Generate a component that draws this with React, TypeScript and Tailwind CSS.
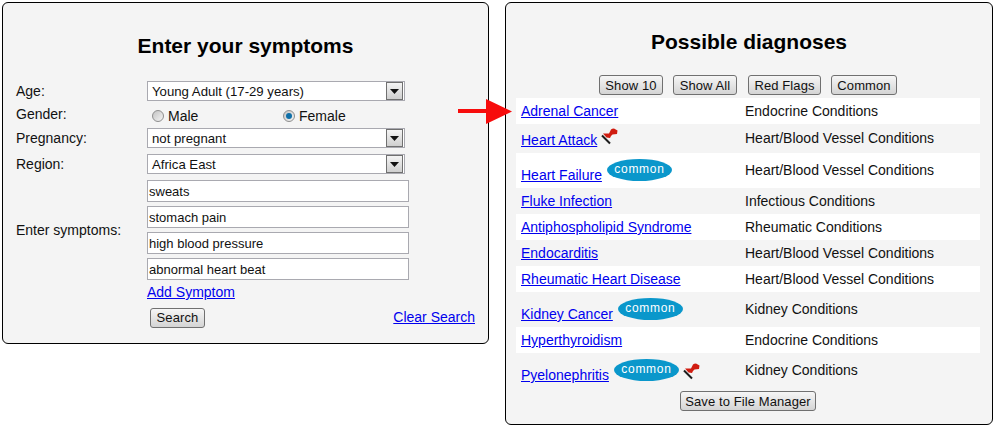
const font = { fontFamily: '"Liberation Sans", Arial, sans-serif' };

type Diagnosis = {
  name: string;
  category: string;
  common?: boolean;
  flag?: boolean;
};

const diagnoses: Diagnosis[] = [
  { name: "Adrenal Cancer", category: "Endocrine Conditions" },
  { name: "Heart Attack", category: "Heart/Blood Vessel Conditions", flag: true },
  { name: "Heart Failure", category: "Heart/Blood Vessel Conditions", common: true },
  { name: "Fluke Infection", category: "Infectious Conditions" },
  { name: "Antiphospholipid Syndrome", category: "Rheumatic Conditions" },
  { name: "Endocarditis", category: "Heart/Blood Vessel Conditions" },
  { name: "Rheumatic Heart Disease", category: "Heart/Blood Vessel Conditions" },
  { name: "Kidney Cancer", category: "Kidney Conditions", common: true },
  { name: "Hyperthyroidism", category: "Endocrine Conditions" },
  { name: "Pyelonephritis", category: "Kidney Conditions", common: true, flag: true },
];

function Flag() {
  return (
    <svg width="17" height="17" viewBox="0 0 17 17" className="shrink-0">
      <path d="M1 7.5 L9 15.5" stroke="#1c1c1c" strokeWidth="2" />
      <path d="M2 5.5 H8 L10 1.5 Q11 0.5 13 0.5 L16.5 2.5 L16 6 L11.5 6.5 L10 8 L9 10 L5.5 9.5 Z" fill="#d01c10" />
    </svg>
  );
}

function Common() {
  return (
    <span className="flex h-[22px] w-[65px] shrink-0 items-center justify-center rounded-[50%] bg-[#0a97cb] pb-[2px] text-[12px] tracking-[0.7px] text-white">
      common
    </span>
  );
}

function Btn({ label, className }: { label: string; className: string }) {
  return (
    <button
      className={`flex h-5 items-center justify-center rounded-[3px] border border-[#707070] bg-gradient-to-b from-[#f6f6f6] to-[#d4d4d4] text-[13px] leading-none tracking-[0.1px] text-[#111] ${className}`}
    >
      {label}
    </button>
  );
}

function SelectBox({ value }: { value: string }) {
  return (
    <div className="flex h-5 w-[258px] items-center border border-[#a9a9b0] bg-white pl-[4px] pr-px text-[13.2px] text-[#111]">
      <span className="flex-1 pt-px">{value}</span>
      <span className="flex h-[18px] w-[17px] items-center justify-center border border-[#707070] bg-gradient-to-b from-[#f4f4f4] to-[#cfcfcf]">
        <svg width="9" height="5" viewBox="0 0 9 5">
          <path d="M0 0 H9 L4.5 5 Z" fill="#111" />
        </svg>
      </span>
    </div>
  );
}

function Radio({ checked }: { checked?: boolean }) {
  return (
    <span className="flex h-3 w-3 items-center justify-center rounded-full border border-[#8e8e8e] bg-gradient-to-br from-[#c4c4c4] to-[#f4f4f4]">
      {checked && <span className="h-[6px] w-[6px] rounded-full bg-[#0f6fa8]" />}
    </span>
  );
}

function TextBox({ value }: { value: string }) {
  return (
    <div className="flex h-[22px] w-[262px] items-center border border-[#a9a9b0] bg-white pl-[1px] pt-[2px] text-[13px] text-[#111]">
      {value}
    </div>
  );
}

function SymptomsPanel() {
  return (
    <section className="h-[342px] w-[487px] shrink-0 rounded-[6px] border border-black bg-[#f4f4f4]">
      <h1 className="mt-[31px] text-center text-[21px] font-bold leading-6 text-black">
        Enter your symptoms
      </h1>
      <div className="mt-[23px] grid grid-cols-[131px_1fr] pl-[13px] text-[14px] text-[#111]">
        <span className="flex h-5 items-center">Age:</span>
        <SelectBox value="Young Adult (17-29 years)" />

        <span className="flex h-[27px] items-start pt-[3px]">Gender:</span>
        <div className="flex h-[27px] items-center pl-[5px] pt-[3px]">
          <span className="flex w-[131px] items-center gap-1">
            <Radio />
            Male
          </span>
          <span className="flex items-center gap-1">
            <Radio checked />
            Female
          </span>
        </div>

        <span className="flex h-5 items-center">Pregnancy:</span>
        <SelectBox value="not pregnant" />

        <span className="mt-[6px] flex h-5 items-center">Region:</span>
        <div className="mt-[6px]">
          <SelectBox value="Africa East" />
        </div>

        <span className="mt-[6px] flex h-[100px] items-center">Enter symptoms:</span>
        <div className="mt-[6px] flex flex-col gap-1">
          <TextBox value="sweats" />
          <TextBox value="stomach pain" />
          <TextBox value="high blood pressure" />
          <TextBox value="abnormal heart beat" />
        </div>

        <span />
        <a href="#" className="mt-[2px] leading-5 text-[#0000ee] underline">
          Add Symptom
        </a>

        <span />
        <div className="mt-[5px] flex w-[328px] items-center justify-between pl-[3px]">
          <Btn label="Search" className="w-[55px]" />
          <a href="#" className="text-[#0000ee] underline">
            Clear Search
          </a>
        </div>
      </div>
    </section>
  );
}

function DiagnosisRow({ item, index }: { item: Diagnosis; index: number }) {
  const tall = item.common;
  return (
    <div
      className={`grid grid-cols-[224px_1fr] pl-[5px] ${index % 2 === 0 ? "bg-white" : ""} ${
        tall ? "h-[35px]" : item.flag ? "h-[29px]" : "h-[26px]"
      }`}
    >
      <div className="flex items-start">
        <a
          href="#"
          className={`text-[#0000ee] underline ${tall ? "mt-[12px]" : item.flag ? "mt-[6px]" : "mt-[3px]"}`}
        >
          {item.name}
        </a>
        {item.common && (
          <span className="ml-[5px] mt-[6px]">
            <Common />
          </span>
        )}
        {item.flag && (
          <span className={item.common ? "ml-[4px] mt-[10px]" : "ml-[4px] mt-[4px]"}>
            <Flag />
          </span>
        )}
      </div>
      <span className={tall ? "mt-[7px]" : item.flag ? "mt-[4px]" : "mt-[3px]"}>{item.category}</span>
    </div>
  );
}

function DiagnosesPanel() {
  return (
    <section className="h-[423px] w-[488px] shrink-0 rounded-[6px] border border-black bg-[#f4f4f4] text-[14px] text-[#111]">
      <h2 className="mt-[27px] text-center text-[21px] font-bold leading-6 text-black">
        Possible diagnoses
      </h2>
      <div className="mt-[21px] flex pl-[93px]">
        <Btn label="Show 10" className="w-[64px]" />
        <Btn label="Show All" className="ml-[10px] w-[64px]" />
        <Btn label="Red Flags" className="ml-[11px] w-[73px]" />
        <Btn label="Common" className="ml-[10px] w-[66px]" />
      </div>
      <div className="ml-[10px] mt-[3px] w-[464px]">
        {diagnoses.map((item, index) => (
          <DiagnosisRow key={item.name} item={item} index={index} />
        ))}
      </div>
      <div className="ml-[174px] mt-[3px] flex">
        <Btn label="Save to File Manager" className="w-[136px]" />
      </div>
    </section>
  );
}

export default function App() {
  return (
    <div className="relative flex h-[428px] w-[995px] items-start gap-[16px] overflow-hidden bg-white pl-[2px] pt-[2px]" style={font}>
      <SymptomsPanel />
      <DiagnosesPanel />
      <svg width="54" height="26" viewBox="0 0 54 26" className="absolute left-[458px] top-[99px]">
        <path d="M0 10 H28 V0 L54 12.5 L28 25 V14 H0 Z" fill="#f70c0c" />
      </svg>
    </div>
  );
}
